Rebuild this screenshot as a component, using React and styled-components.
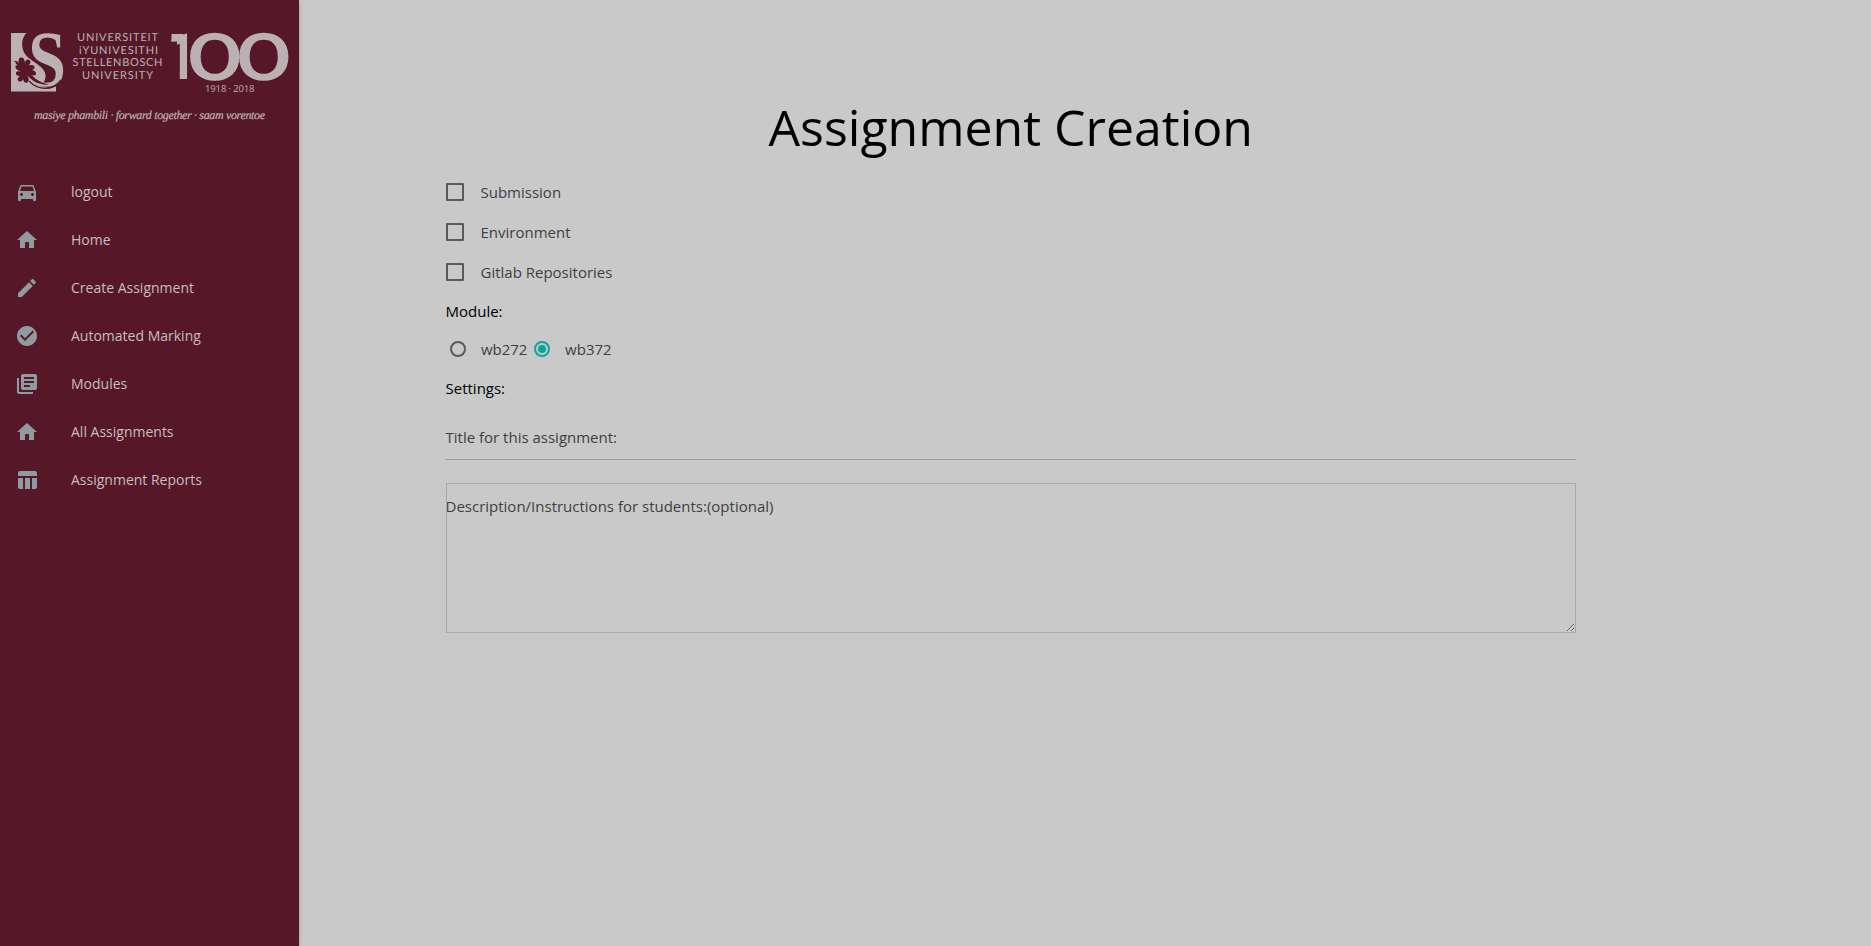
import React from "react";
import styled, { createGlobalStyle } from "styled-components";
import {
  MdDirectionsCar,
  MdHome,
  MdEdit,
  MdCheckCircle,
  MdLibraryBooks,
  MdTableChart,
} from "react-icons/md";

const Global = createGlobalStyle`
  *, *::before, *::after { box-sizing: border-box; }
  body {
    margin: 0;
    background: #c9c9c9;
    color: #000;
    font: 15px/22.5px "Open Sans", sans-serif;
  }
`;

const Page = styled.div`
  display: flex;
  height: 946px;
  overflow: hidden;
`;

const Sidebar = styled.aside`
  flex: 0 0 299px;
  background: #561828;
  box-shadow: 0 2px 2px 0 rgba(0, 0, 0, 0.11), 0 3px 1px -2px rgba(0, 0, 0, 0.1),
    0 1px 5px 0 rgba(0, 0, 0, 0.16);
`;

const Logo = styled.svg`
  display: block;
  width: 299px;
  height: 168px;
  fill: #bbb1b5;
  text-rendering: geometricPrecision;
`;

const Menu = styled.nav`
  display: flex;
  flex-direction: column;
`;

const MenuItem = styled.a`
  display: flex;
  align-items: center;
  height: 48px;
  padding-left: 15px;
  gap: 32px;
  font-size: 14px;
  line-height: 48px;
  color: #c9bdc0;

  svg {
    width: 24px;
    height: 24px;
    color: #8f9ba0;
  }
`;

const Main = styled.main`
  flex: 1;
  display: flex;
  flex-direction: column;
  padding: 99px 295px 0 146.5px;
`;

const Title = styled.h1`
  margin: 0;
  height: 81px;
  font-size: 50px;
  line-height: 56px;
  font-weight: 400;
  text-align: center;
`;

const CheckRow = styled.label`
  display: flex;
  align-items: center;
  height: 25px;
  margin-bottom: 15px;
  gap: 17px;
  color: #3f3f3f;
`;

const CheckBox = styled.span`
  width: 18px;
  height: 18px;
  margin-top: -2px;
  border: 2px solid #5a5a5a;
  border-radius: 1px;
`;

const Heading = styled.p`
  margin: 0;
  height: 23px;
`;

const RadioGroup = styled.div`
  display: flex;
  height: 25px;
  margin: 14px 0 15px;
  padding-left: 4px;
  gap: 6.3px;
  color: #3f3f3f;
`;

const RadioRow = styled.label`
  display: flex;
  align-items: center;
  gap: 15.4px;
`;

const Radio = styled.span`
  display: grid;
  place-items: center;
  width: 16px;
  height: 16px;
  margin-top: -2px;
  border: 2px solid ${(p) => (p.$on ? "#0ba69b" : "#5a5a5a")};
  border-radius: 50%;

  &::after {
    content: "";
    width: 8px;
    height: 8px;
    border-radius: 50%;
    background: ${(p) => (p.$on ? "#0ba69b" : "transparent")};
  }
`;

const TitleField = styled.div`
  height: 45px;
  margin: 15px 0 23px;
  padding-top: 11px;
  border-bottom: 1px solid #9e9e9e;
  color: #3f3f3f;
`;

const Description = styled.textarea`
  display: block;
  width: 100%;
  height: 150px;
  margin: 0;
  padding: 11px 0 0;
  border: 1px solid #a9a9a9;
  outline: none;
  background: transparent;
  font: inherit;
  text-indent: -1px;

  &::placeholder {
    color: #3f3f3f;
    opacity: 1;
  }
`;

const items = [
  [MdDirectionsCar, "logout"],
  [MdHome, "Home"],
  [MdEdit, "Create Assignment"],
  [MdCheckCircle, "Automated Marking"],
  [MdLibraryBooks, "Modules"],
  [MdHome, "All Assignments"],
  [MdTableChart, "Assignment Reports"],
];

const nameLines = [
  ["UNIVERSITEIT", 77, 81, 41],
  ["iYUNIVESITHI", 79, 79, 53.7],
  ["STELLENBOSCH", 72.5, 90, 66.3],
  ["UNIVERSITY", 82, 71, 79.3],
];

function UniversityLogo() {
  return (
    <Logo viewBox="0 0 299 168">
      <clipPath id="flag">
        <path d="M170 33H190V81H177V41.500H170z" />
      </clipPath>
      <rect x="11" y="33" width="45" height="58.500" />
      <path fill="#561828" d="M27 32.500C20.500 38 20.500 50 27 56.500C34 63 45 67 45.500 75C46 80 43 84 40 86L50 88.500L57 86V32.500z" />
      <text transform="translate(28 86.300) scale(.86 1)" fontFamily="Liberation Serif" fontSize="79.500" fontWeight="700">S</text>
      <path fill="none" stroke="#561828" strokeWidth="1.300" d="M29 81Q36 88.500 46 88.300Q55 88 61 80" />
      {/* oak leaf */}
      <path fill="#561828" d="M13.500 62c2-2 4-1 5.500 1-1-3 0-6 2.500-5.500 2.500 0 3.500 3 3 5.500 1-3 3-4.500 5-3 2 2 .5 4-1 5.500 3-1 6-.5 6 2 0 2-2 2.500-4 2.500 3 0 6 1.500 5.500 4-.5 2-3 1.500-4.500.5 3 4 8 8 18 10-11 1-18-4-22.500-9.500 2 3 2.500 6 .5 7.500-2.500 1-4-1-4.500-3.500-.5 2-2.500 3.500-4.500 2-2-2 0-4 1.500-5-2.500 0-4.500-1-4-3.500 1-2 3-1.500 5-.5-3-2-6-3-5.500-6 .5-1.500 3-.5 4.500 0-3-1-5-2.500-4.500-4z" />
      {nameLines.map(([text, x, width, y]) => (
        <text key={text} x={x} y={y} fontFamily="Lato" fontSize="11" textLength={width}>
          {text}
        </text>
      ))}
      <g clipPath="url(#flag)">
        <rect x="171.500" y="34" width="12" height="7.500" />
        <text transform="translate(167 79) scale(.8 1)" fontFamily="Roboto" fontWeight="700" fontSize="64">1</text>
      </g>
      <text transform="translate(190.200 78.200) scale(1.410 1)" fontFamily="Lato" fontWeight="300" fontSize="60"
        stroke="#bbb1b5" strokeWidth="4.500" vectorEffect="non-scaling-stroke">00</text>
      <text x="205" y="91.500" fontFamily="Open Sans" fontSize="9.500" fontWeight="500" textLength="49.500">1918 · 2018</text>
      <text x="34" y="119" fontFamily="Liberation Serif" fontStyle="italic" fontSize="12"
        stroke="#bbb1b5" strokeWidth=".2" textLength="231">masiye phambili · forward together · saam vorentoe</text>
    </Logo>
  );
}

export default function App() {
  return (
    <Page>
      <Global />
      <Sidebar>
        <UniversityLogo />
        <Menu>
          {items.map(([Icon, label]) => (
            <MenuItem key={label}>
              <Icon />
              {label}
            </MenuItem>
          ))}
        </Menu>
      </Sidebar>
      <Main>
        <Title>Assignment Creation</Title>
        {["Submission", "Environment", "Gitlab Repositories"].map((label) => (
          <CheckRow key={label}>
            <CheckBox />
            {label}
          </CheckRow>
        ))}
        <Heading>Module:</Heading>
        <RadioGroup>
          <RadioRow><Radio />wb272</RadioRow>
          <RadioRow><Radio $on />wb372</RadioRow>
        </RadioGroup>
        <Heading>Settings:</Heading>
        <TitleField>Title for this assignment:</TitleField>
        <Description placeholder="Description/Instructions for students:(optional)" />
      </Main>
    </Page>
  );
}
